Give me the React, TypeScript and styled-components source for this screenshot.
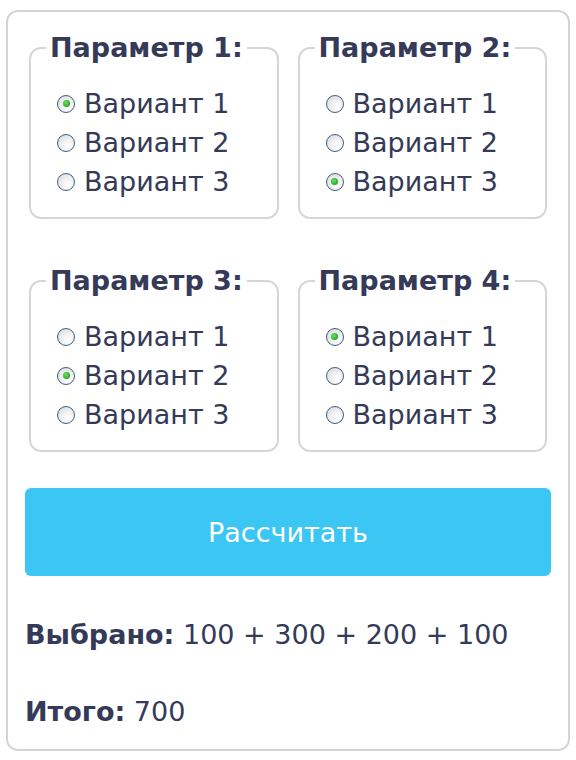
import React, { useState } from "react";
import styled, { createGlobalStyle } from "styled-components";

const Global = createGlobalStyle`
  html, body { margin: 0; padding: 0; background: #ffffff; }
  body { font-family: "DejaVu Sans", "Liberation Sans", Arial, sans-serif; color: #343a58; }
  * { box-sizing: border-box; }
`;

const Card = styled.div`
  margin: 10px 0 0 6px;
  width: 564px;
  border: 2px solid #d4d4d4;
  border-radius: 12px;
  padding: 21px 17px 22px 17px;
  background: #fff;
`;

const Grid = styled.div`
  display: grid;
  grid-template-columns: 1fr 1fr;
  column-gap: 11px;
  row-gap: 47px;
`;

const Fieldset = styled.fieldset`
  margin: 0 4px;
  min-width: 0;
  border: 2px solid #d6d6d6;
  border-radius: 12px;
  padding: 21px 17px 16px 15px;
`;

const Legend = styled.legend`
  padding: 0 4px;
  font-size: 27px;
  line-height: 30px;
  font-weight: bold;
  color: #343a58;
`;

const Option = styled.label`
  display: flex;
  align-items: center;
  gap: 9px;
  height: 39px;
  margin-left: 11px;
  font-size: 27px;
  color: #343a58;
  cursor: pointer;
`;

const HiddenInput = styled.input`
  position: absolute;
  opacity: 0;
  width: 0;
  height: 0;
  margin: 0;
`;

const Dot = styled.span<{ $checked: boolean }>`
  flex: none;
  width: 18px;
  height: 18px;
  border-radius: 50%;
  border: 1.5px solid #3d5f85;
  background: radial-gradient(circle at 65% 70%, #ffffff 0%, #f2f2f2 40%, #d6d6d6 100%);
  display: flex;
  align-items: center;
  justify-content: center;
  &::after {
    content: "";
    width: 7px;
    height: 7px;
    border-radius: 50%;
    background: radial-gradient(circle at 40% 40%, #6fe06f 0%, #21a821 70%);
    display: ${(p) => (p.$checked ? "block" : "none")};
  }
`;

const Button = styled.button`
  display: block;
  width: 100%;
  height: 88px;
  margin-top: 36px;
  border: none;
  border-radius: 6px;
  background: #3cc6f4;
  color: #ffffff;
  font-family: "DejaVu Sans", "Liberation Sans", Arial, sans-serif;
  font-size: 27px;
  cursor: pointer;
`;

const Line = styled.div<{ $top: number }>`
  margin-top: ${(p) => p.$top}px;
  font-size: 27px;
  line-height: 30px;
  color: #343a58;
`;

const Label = styled.b`
  font-weight: bold;
`;

const params = [
  { title: "Параметр 1:", values: [100, 200, 300] },
  { title: "Параметр 2:", values: [100, 200, 300] },
  { title: "Параметр 3:", values: [100, 200, 300] },
  { title: "Параметр 4:", values: [100, 200, 300] },
];

export default function App() {
  const [sel, setSel] = useState<number[]>([0, 2, 1, 0]);
  const [result, setResult] = useState<number[]>([100, 300, 200, 100]);

  const calc = () => {
    setResult(sel.map((s, i) => params[i].values[s]));
  };

  return (
    <>
      <Global />
      <Card>
        <Grid>
          {params.map((p, i) => (
            <Fieldset key={i}>
              <Legend>{p.title}</Legend>
              {p.values.map((v, j) => (
                <Option key={j}>
                  <HiddenInput
                    type="radio"
                    name={`p${i}`}
                    checked={sel[i] === j}
                    onChange={() => setSel(sel.map((s, k) => (k === i ? j : s)))}
                  />
                  <Dot $checked={sel[i] === j} />
                  Вариант {j + 1}
                </Option>
              ))}
            </Fieldset>
          ))}
        </Grid>
        <Button onClick={calc}>Рассчитать</Button>
        <Line $top={44}>
          <Label>Выбрано:</Label> {result.join(" + ")}
        </Line>
        <Line $top={47}>
          <Label>Итого:</Label> {result.reduce((a, b) => a + b, 0)}
        </Line>
      </Card>
    </>
  );
}
